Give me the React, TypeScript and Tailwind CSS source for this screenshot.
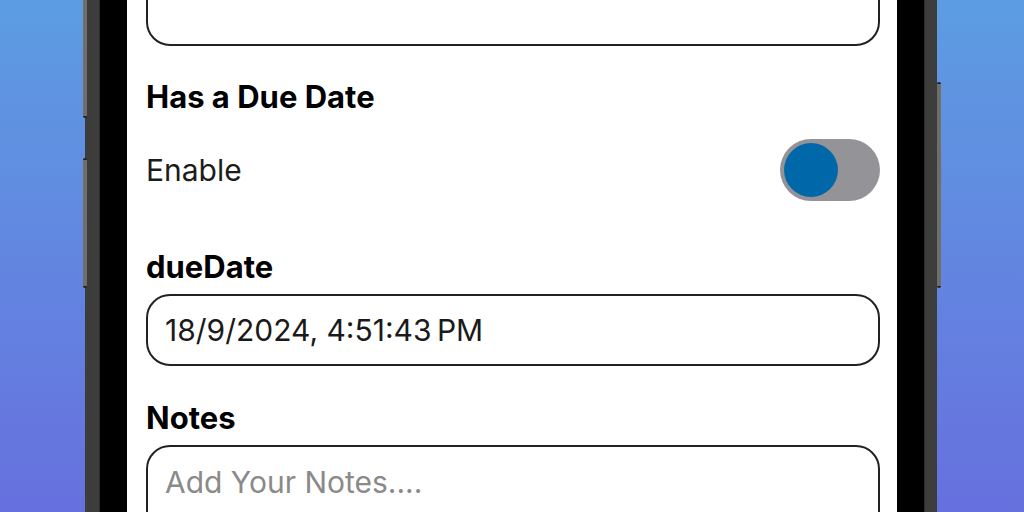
import React from 'react';

const font = { fontFamily: 'Inter, "Noto Sans", sans-serif' };

function Field({ children, className = '' }: { children?: React.ReactNode; className?: string }) {
  return (
    <div className={`rounded-[24px] border-2 border-[#222] bg-white px-[17px] ${className}`}>
      {children}
    </div>
  );
}

function Label({ text, className = '' }: { text: string; className?: string }) {
  return (
    <p className={`text-[31px] leading-[32px] font-bold text-black ${className}`}>{text}</p>
  );
}

export default function App() {
  return (
    <div
      className="flex h-[512px] w-[1024px] overflow-hidden bg-gradient-to-b from-[#5c9ce2] to-[#6670de] pl-[85px]"
      style={font}>
      {/* Phone body */}
      <div className="relative h-full w-[852px] bg-gradient-to-r from-[#3c3c3a] via-[#777670] to-[#3c3c3a] pl-[14px] pr-[12px]">
        {/* side buttons */}
        <div className="absolute left-[-2px] top-[-10px] h-[128px] w-[4px] rounded-b-sm border-b-2 border-[#222] bg-[#6f6e6a]" />
        <div className="absolute left-[-2px] top-[158px] h-[130px] w-[4px] rounded-sm border-y-2 border-[#222] bg-[#6f6e6a]" />
        <div className="absolute right-[-4px] top-[82px] h-[206px] w-[4px] rounded-sm border-y-2 border-[#222] bg-[#6f6e6a]" />

        <div className="h-full bg-black px-[28px] shadow-[inset_1px_0_0_#2a2a2a,inset_-1px_0_0_#2a2a2a]">
          {/* Screen */}
          <div className="flex h-full flex-col overflow-hidden bg-white pl-[19px] pr-[17px]">
            <Field className="-mt-[26px] h-[72px] shrink-0" />

            <Label text="Has a Due Date" className="mt-[35px]" />

            <div className="mt-[26px] flex h-[62px] shrink-0 items-center justify-between">
              <span className="text-[30px] text-[#1c1c1c]">Enable</span>
              <div className="flex h-[62px] w-[100px] items-center rounded-full bg-[#949398] px-[4px]">
                <div className="h-[54px] w-[54px] rounded-full bg-[#0068a8]" />
              </div>
            </div>

            <Label text="dueDate" className="mt-[50px]" />

            <Field className="mt-[11px] flex h-[72px] shrink-0 items-center">
              <span className="text-[30px] text-[#1a1a1a]">18/9/2024, 4:51:43&#8201;PM</span>
            </Field>

            <Label text="Notes" className="mt-[36px]" />

            <Field className="mt-[11px] h-[120px] shrink-0 pt-[17px]">
              <span className="text-[30px] leading-[36px] text-[#8a8a8a]">Add Your Notes....</span>
            </Field>
          </div>
        </div>
      </div>
    </div>
  );
}
